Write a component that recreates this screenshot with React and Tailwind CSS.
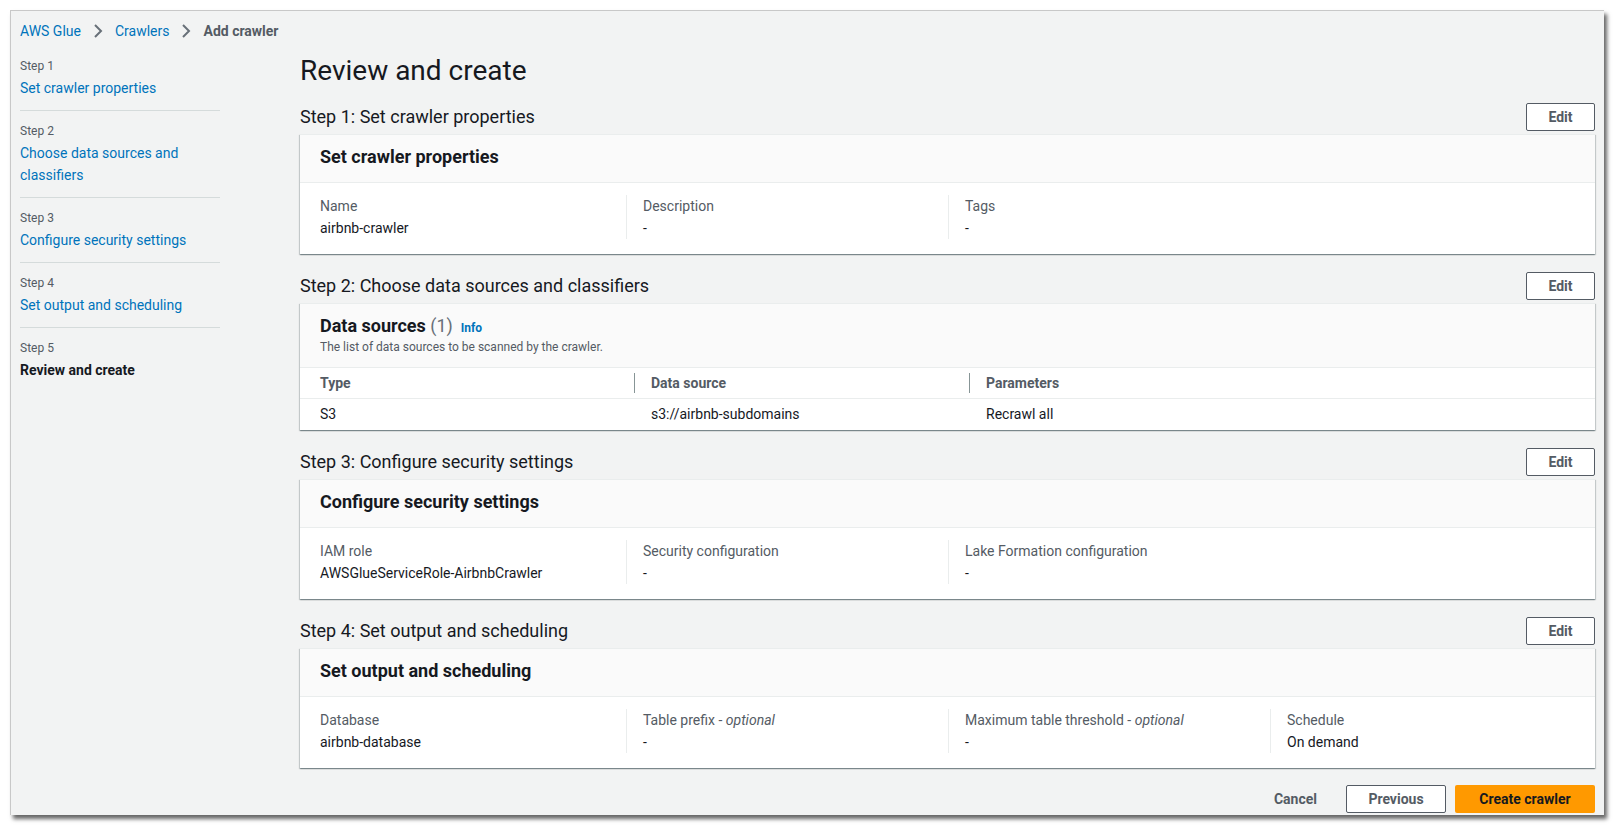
import React from "react"

const font = { fontFamily: "Roboto, 'Noto Sans', sans-serif" }

const steps = [
  { n: 1, name: "Set crawler properties" },
  { n: 2, name: "Choose data sources and classifiers" },
  { n: 3, name: "Configure security settings" },
  { n: 4, name: "Set output and scheduling" },
  { n: 5, name: "Review and create", current: true },
]

function Chevron() {
  return (
    <svg width="10" height="14" viewBox="0 0 10 14" className="mx-[12px]">
      <polyline points="2,1 8,7 2,13" fill="none" stroke="#687078" strokeWidth="2" />
    </svg>
  )
}

function EditButton() {
  return (
    <button className="h-[28px] w-[69px] border border-[#545b64] rounded-[2px] bg-white text-[14px] font-bold text-[#545b64]">
      Edit
    </button>
  )
}

function SectionHeading({ children }) {
  return (
    <div className="flex items-center justify-between h-[28px]">
      <h2 className="text-[18px] leading-[24px] text-[#16191f]">{children}</h2>
      <EditButton />
    </div>
  )
}

function Card({ children }) {
  return (
    <div className="mt-[3px] bg-white border-t border-[#eaeded] shadow-[0_1px_1px_0_rgba(0,28,36,0.3),1px_1px_1px_0_rgba(0,28,36,0.15),-1px_1px_1px_0_rgba(0,28,36,0.15)]">
      {children}
    </div>
  )
}

function CardHeader({ title }) {
  return (
    <div className="bg-[#fafafa] border-b border-[#eaeded] px-[20px] pt-[10px] pb-[13px]">
      <h3 className="text-[18px] leading-[24px] font-bold text-[#16191f]">{title}</h3>
    </div>
  )
}

function KeyValues({ items }) {
  return (
    <div className="grid grid-cols-[306px_322px_322px_1fr] pl-[20px] pt-[12px] pb-[15px]">
      {items.map((it, i) => (
        <div
          key={i}
          className={i === 0 ? "" : "border-l border-[#eaeded] pl-[16px]"}>
          <div className="text-[14px] leading-[22px] text-[#545b64]">
            {it.label}
            {it.optional && (
              <>
                {" - "}
                <i>optional</i>
              </>
            )}
          </div>
          <div className="text-[14px] leading-[22px] text-[#16191f]">{it.value}</div>
        </div>
      ))}
    </div>
  )
}

export default function App() {
  return (
    <div className="w-[1622px] h-[834px] bg-white overflow-hidden" style={font}>
      <div className="ml-[10px] mt-[10px] w-[1594px] h-[805px] bg-[#f2f3f3] border-t border-l border-[#c8c8c8] shadow-[3px_4px_4px_rgba(0,0,0,0.6)] overflow-hidden">
        {/* Breadcrumbs */}
        <div className="flex items-center pl-[9px] pt-[10px] h-[30px] text-[14px] leading-[20px]">
          <span className="text-[#0073bb]">AWS Glue</span>
          <Chevron />
          <span className="text-[#0073bb]">Crawlers</span>
          <Chevron />
          <span className="font-bold text-[#545b64]">Add crawler</span>
        </div>

        <div className="flex mt-[4px]">
          {/* Side navigation */}
          <nav className="w-[200px] ml-[9px] mt-[1px] shrink-0">
            {steps.map((s, i) => (
              <div
                key={s.n}
                className={
                  "pt-[12px] pb-[11px] " +
                  (i < steps.length - 1 ? "border-b border-[#d5dbdb]" : "")
                }>
                <div className="text-[12px] leading-[16px] text-[#545b64]">Step {s.n}</div>
                <div
                  className={
                    "mt-[3px] text-[14px] leading-[22px] pr-[30px] " +
                    (s.current ? "font-bold text-[#16191f]" : "text-[#0073bb]")
                  }>
                  {s.name}
                </div>
              </div>
            ))}
          </nav>

          {/* Main */}
          <main className="ml-[80px] w-[1295px]">
            <h1 className="mt-[8px] mb-[14px] text-[28px] leading-[36px] text-[#16191f]">
              Review and create
            </h1>

            <section>
              <SectionHeading>Step 1: Set crawler properties</SectionHeading>
              <Card>
                <CardHeader title="Set crawler properties" />
                <KeyValues
                  items={[
                    { label: "Name", value: "airbnb-crawler" },
                    { label: "Description", value: "-" },
                    { label: "Tags", value: "-" },
                  ]}
                />
              </Card>
            </section>

            <section className="mt-[18px]">
              <SectionHeading>Step 2: Choose data sources and classifiers</SectionHeading>
              <Card>
                <div className="bg-[#fafafa] border-b border-[#eaeded] px-[20px] pt-[10px] pb-[12px]">
                  <div className="flex items-baseline">
                    <h3 className="text-[18px] leading-[24px] font-bold text-[#16191f]">
                      Data sources <span className="font-normal text-[#687078]">(1)</span>
                    </h3>
                    <span className="ml-[8px] text-[12px] font-bold text-[#0073bb]">Info</span>
                  </div>
                  <p className="mt-[1px] text-[12px] leading-[16px] text-[#545b64]">
                    The list of data sources to be scanned by the crawler.
                  </p>
                </div>
                <div className="grid grid-cols-[334px_335px_1fr] text-[14px] border-b border-[#eaeded]">
                  <div className="h-[30px] flex items-center pl-[20px] font-bold text-[#545b64]">Type</div>
                  <div className="h-[30px] flex items-center">
                    <div className="h-[20px] border-l border-[#879596] pl-[16px] flex items-center font-bold text-[#545b64]">
                      Data source
                    </div>
                  </div>
                  <div className="h-[30px] flex items-center">
                    <div className="h-[20px] border-l border-[#879596] pl-[16px] flex items-center font-bold text-[#545b64]">
                      Parameters
                    </div>
                  </div>
                </div>
                <div className="grid grid-cols-[334px_335px_1fr] text-[14px] text-[#16191f] h-[31px] items-center">
                  <div className="pl-[20px]">S3</div>
                  <div className="pl-[17px]">s3://airbnb-subdomains</div>
                  <div className="pl-[17px]">Recrawl all</div>
                </div>
              </Card>
            </section>

            <section className="mt-[18px]">
              <SectionHeading>Step 3: Configure security settings</SectionHeading>
              <Card>
                <CardHeader title="Configure security settings" />
                <KeyValues
                  items={[
                    { label: "IAM role", value: "AWSGlueServiceRole-AirbnbCrawler" },
                    { label: "Security configuration", value: "-" },
                    { label: "Lake Formation configuration", value: "-" },
                  ]}
                />
              </Card>
            </section>

            <section className="mt-[18px]">
              <SectionHeading>Step 4: Set output and scheduling</SectionHeading>
              <Card>
                <CardHeader title="Set output and scheduling" />
                <KeyValues
                  items={[
                    { label: "Database", value: "airbnb-database" },
                    { label: "Table prefix", optional: true, value: "-" },
                    { label: "Maximum table threshold", optional: true, value: "-" },
                    { label: "Schedule", value: "On demand" },
                  ]}
                />
              </Card>
            </section>

            {/* Footer actions */}
            <div className="mt-[17px] flex justify-end items-center gap-[9px]">
              <button className="h-[28px] px-[20px] text-[14px] font-bold text-[#545b64]">Cancel</button>
              <button className="h-[28px] w-[100px] border border-[#545b64] rounded-[2px] bg-white text-[14px] font-bold text-[#545b64]">
                Previous
              </button>
              <button className="h-[28px] w-[140px] rounded-[2px] bg-[#ff9900] text-[14px] font-bold text-[#16191f]">
                Create crawler
              </button>
            </div>
          </main>
        </div>
      </div>
    </div>
  )
}
